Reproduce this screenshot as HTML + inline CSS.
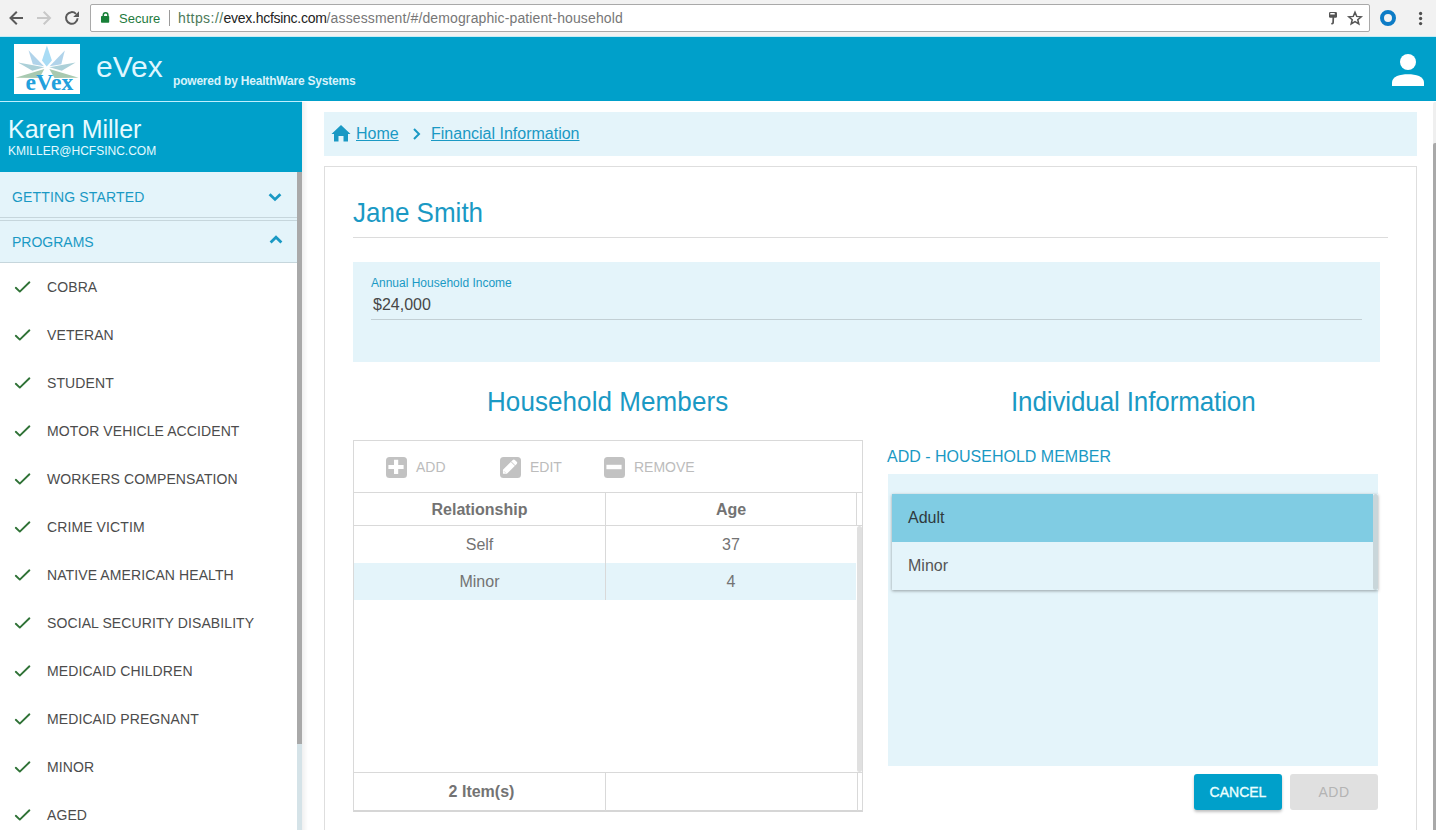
<!DOCTYPE html>
<html><head><meta charset="utf-8">
<style>
*{box-sizing:border-box;margin:0;padding:0}
html,body{width:1436px;height:830px;overflow:hidden;background:#fff;font-family:"Liberation Sans",sans-serif;position:relative}
.a{position:absolute}
.t{position:absolute;white-space:nowrap;line-height:1}
.big{transform:scaleY(1.055);transform-origin:0 22px}
</style></head><body>

<!-- Browser toolbar -->
<div class="a" style="left:0;top:0;width:1436px;height:37px;background:#f2f2f2"></div>
<div class="a" style="left:0;top:36px;width:1436px;height:1px;background:#c6ecf6"></div>
<svg class="a" style="left:0;top:0" width="90" height="37">
  <g fill="none" stroke="#5a5a5a" stroke-width="2">
    <path d="M23 18H11M16.8 11.7L10.5 18L16.8 24.3"/>
  </g>
  <g fill="none" stroke="#c8c8c8" stroke-width="2">
    <path d="M37 18H49.5M43.7 11.7L50 18L43.7 24.3"/>
  </g>
  <g fill="none" stroke="#5a5a5a" stroke-width="2">
    <path d="M77.6 18.3A5.8 5.8 0 1 1 76 13.9"/>
  </g>
  <path d="M79 11.2V17H73.2Z" fill="#5a5a5a"/>
</svg>
<div class="a" style="left:90px;top:4px;width:1280px;height:28px;background:#fff;border:1px solid #a9a9a9;border-radius:2px"></div>
<svg class="a" style="left:100px;top:11px" width="12" height="14">
  <path d="M3.3 5.5V4A2.3 2.3 0 0 1 7.9 4V5.5" fill="none" stroke="#188038" stroke-width="1.5"/>
  <rect x="1" y="5" width="8.2" height="6.7" rx="0.7" fill="#188038"/>
</svg>
<div class="t" style="left:119px;top:12px;font-size:13px;color:#1e7a3e">Secure</div>
<div class="a" style="left:169px;top:10px;width:1px;height:16px;background:#9a9a9a"></div>
<div class="t" style="left:178px;top:11px;font-size:14px;color:#777"><span style="color:#4d7a5a;letter-spacing:0.44px">https://</span><span style="color:#222;letter-spacing:-0.27px">evex.hcfsinc.com</span><span style="letter-spacing:0.12px">/assessment/#/demographic-patient-household</span></div>
<svg class="a" style="left:1326px;top:10px" width="14" height="16">
  <rect x="3" y="2" width="8" height="5.8" rx="1.2" fill="#555"/>
  <rect x="4.2" y="3" width="4.6" height="1.6" rx="0.4" fill="#fff"/>
  <path d="M7.3 7.5L7.1 12.6Q7 13.8 6 13.6" fill="none" stroke="#555" stroke-width="1.7" stroke-linecap="round"/>
</svg>
<svg class="a" style="left:1346px;top:10px" width="18" height="17">
  <path d="M9.00 2.25L10.70 6.40L15.18 6.74L11.76 9.65L12.82 14.01L9.00 11.65L5.18 14.01L6.24 9.65L2.82 6.74L7.30 6.40Z" fill="none" stroke="#555" stroke-width="1.5" stroke-linejoin="miter"/>
</svg>
<div class="a" style="left:1380px;top:10px;width:16px;height:16px;border-radius:50%;border:4px solid #0d7cc6"></div>
<svg class="a" style="left:1414px;top:8px" width="14" height="20"><circle cx="6.6" cy="5.5" r="1.65" fill="#505050"/><circle cx="6.6" cy="10.5" r="1.65" fill="#505050"/><circle cx="6.6" cy="15.6" r="1.65" fill="#505050"/></svg>

<!-- App header -->
<div class="a" style="left:0;top:37px;width:1436px;height:64px;background:#00a0ca"></div>
<div class="a" style="left:14px;top:44px;width:66px;height:50px;background:#fff"></div>
<svg class="a" style="left:14px;top:44px" width="66" height="50">
  <path d="M32.9 1.4L37.9 16.5L32.7 22.6L28 16.5Z" fill="#a9dcf5"/>
  <path d="M14.5 6.2L30 22.2L18.8 20.2Z" fill="#b0d3ea"/>
  <path d="M50.8 6.4L35.6 22.2L47.3 20.2Z" fill="#b0d3ea"/>
  <path d="M4.1 18.4L30.3 23.2L18.4 26.7Z" fill="#acd0d8"/>
  <path d="M61.6 18.4L35.4 23.2L47.8 26.7Z" fill="#acd0d8"/>
  <path d="M1.4 33.8L30.3 25L25.5 34Z" fill="#a8c9b0"/>
  <path d="M64.6 33.8L35.4 25L40.5 34Z" fill="#a8c9b0"/>
  <text x="11.6" y="46" font-family="Liberation Serif" font-weight="bold" font-size="23.6" fill="#22a0dc">eVex</text>
</svg>
<div class="t" style="left:96px;top:52px;font-size:30px;color:#dff6ff">eVex</div>
<div class="t" style="left:173px;top:75px;font-size:12px;font-weight:bold;color:#d8f2fb;letter-spacing:-0.2px">powered by HealthWare Systems</div>
<svg class="a" style="left:1390px;top:52px" width="36" height="36">
  <circle cx="18" cy="10" r="8" fill="#fff"/>
  <path d="M2 34V30.5C2 24.5 10 22.3 18 22.3C26 22.3 34 24.5 34 30.5V34Z" fill="#fff"/>
</svg>

<!-- Sidebar -->
<div class="a" style="left:0;top:101px;width:302px;height:1px;background:#bfefff"></div>
<div class="a" style="left:0;top:102px;width:302px;height:70px;background:#00a0ca"></div>
<div class="t" style="left:8px;top:117px;font-size:25px;color:#e6fbff">Karen Miller</div>
<div class="t" style="left:8px;top:145px;font-size:12px;color:#e4faff">KMILLER@HCFSINC.COM</div>

<div class="a" style="left:0;top:172px;width:297px;height:90px;background:#e4f4fa"></div>
<div class="a" style="left:0;top:217px;width:297px;height:1px;background:#c6d6dc"></div>
<div class="t" style="left:12px;top:190px;font-size:14px;color:#1a99c4;letter-spacing:0.15px">GETTING STARTED</div>
<svg class="a" style="left:266px;top:190px" width="18" height="14"><path d="M3.6 4.2L9 9.4L14.4 4.2" fill="none" stroke="#1a99c4" stroke-width="2.8"/></svg>
<div class="a" style="left:0;top:220px;width:297px;height:1px;background:#c6d6dc"></div>
<div class="a" style="left:0;top:262px;width:297px;height:1px;background:#c6d6dc"></div>
<div class="t" style="left:12px;top:235px;font-size:14px;color:#1a99c4">PROGRAMS</div>
<svg class="a" style="left:267px;top:233px" width="18" height="14"><path d="M3.6 9.4L9 4.2L14.4 9.4" fill="none" stroke="#1a99c4" stroke-width="2.8"/></svg>

<svg class="a" style="left:14px;top:280px" width="18" height="14"><path d="M1.8 7.8L5.8 11.6L15.4 2.3" fill="none" stroke="#2f7236" stroke-width="1.9" stroke-linecap="round" stroke-linejoin="round"/></svg>
<div class="t" style="left:47px;top:280px;font-size:14px;color:#4c4c4c;letter-spacing:0.1px">COBRA</div>
<svg class="a" style="left:14px;top:328px" width="18" height="14"><path d="M1.8 7.8L5.8 11.6L15.4 2.3" fill="none" stroke="#2f7236" stroke-width="1.9" stroke-linecap="round" stroke-linejoin="round"/></svg>
<div class="t" style="left:47px;top:328px;font-size:14px;color:#4c4c4c;letter-spacing:0.1px">VETERAN</div>
<svg class="a" style="left:14px;top:376px" width="18" height="14"><path d="M1.8 7.8L5.8 11.6L15.4 2.3" fill="none" stroke="#2f7236" stroke-width="1.9" stroke-linecap="round" stroke-linejoin="round"/></svg>
<div class="t" style="left:47px;top:376px;font-size:14px;color:#4c4c4c;letter-spacing:0.1px">STUDENT</div>
<svg class="a" style="left:14px;top:424px" width="18" height="14"><path d="M1.8 7.8L5.8 11.6L15.4 2.3" fill="none" stroke="#2f7236" stroke-width="1.9" stroke-linecap="round" stroke-linejoin="round"/></svg>
<div class="t" style="left:47px;top:424px;font-size:14px;color:#4c4c4c;letter-spacing:0.1px">MOTOR VEHICLE ACCIDENT</div>
<svg class="a" style="left:14px;top:472px" width="18" height="14"><path d="M1.8 7.8L5.8 11.6L15.4 2.3" fill="none" stroke="#2f7236" stroke-width="1.9" stroke-linecap="round" stroke-linejoin="round"/></svg>
<div class="t" style="left:47px;top:472px;font-size:14px;color:#4c4c4c;letter-spacing:0.1px">WORKERS COMPENSATION</div>
<svg class="a" style="left:14px;top:520px" width="18" height="14"><path d="M1.8 7.8L5.8 11.6L15.4 2.3" fill="none" stroke="#2f7236" stroke-width="1.9" stroke-linecap="round" stroke-linejoin="round"/></svg>
<div class="t" style="left:47px;top:520px;font-size:14px;color:#4c4c4c;letter-spacing:0.1px">CRIME VICTIM</div>
<svg class="a" style="left:14px;top:568px" width="18" height="14"><path d="M1.8 7.8L5.8 11.6L15.4 2.3" fill="none" stroke="#2f7236" stroke-width="1.9" stroke-linecap="round" stroke-linejoin="round"/></svg>
<div class="t" style="left:47px;top:568px;font-size:14px;color:#4c4c4c;letter-spacing:0.1px">NATIVE AMERICAN HEALTH</div>
<svg class="a" style="left:14px;top:616px" width="18" height="14"><path d="M1.8 7.8L5.8 11.6L15.4 2.3" fill="none" stroke="#2f7236" stroke-width="1.9" stroke-linecap="round" stroke-linejoin="round"/></svg>
<div class="t" style="left:47px;top:616px;font-size:14px;color:#4c4c4c;letter-spacing:0.1px">SOCIAL SECURITY DISABILITY</div>
<svg class="a" style="left:14px;top:664px" width="18" height="14"><path d="M1.8 7.8L5.8 11.6L15.4 2.3" fill="none" stroke="#2f7236" stroke-width="1.9" stroke-linecap="round" stroke-linejoin="round"/></svg>
<div class="t" style="left:47px;top:664px;font-size:14px;color:#4c4c4c;letter-spacing:0.1px">MEDICAID CHILDREN</div>
<svg class="a" style="left:14px;top:712px" width="18" height="14"><path d="M1.8 7.8L5.8 11.6L15.4 2.3" fill="none" stroke="#2f7236" stroke-width="1.9" stroke-linecap="round" stroke-linejoin="round"/></svg>
<div class="t" style="left:47px;top:712px;font-size:14px;color:#4c4c4c;letter-spacing:0.1px">MEDICAID PREGNANT</div>
<svg class="a" style="left:14px;top:760px" width="18" height="14"><path d="M1.8 7.8L5.8 11.6L15.4 2.3" fill="none" stroke="#2f7236" stroke-width="1.9" stroke-linecap="round" stroke-linejoin="round"/></svg>
<div class="t" style="left:47px;top:760px;font-size:14px;color:#4c4c4c;letter-spacing:0.1px">MINOR</div>
<svg class="a" style="left:14px;top:808px" width="18" height="14"><path d="M1.8 7.8L5.8 11.6L15.4 2.3" fill="none" stroke="#2f7236" stroke-width="1.9" stroke-linecap="round" stroke-linejoin="round"/></svg>
<div class="t" style="left:47px;top:808px;font-size:14px;color:#4c4c4c;letter-spacing:0.1px">AGED</div>

<!-- sidebar scrollbar -->
<div class="a" style="left:297px;top:172px;width:5px;height:658px;background:#d5e3e8"></div>
<div class="a" style="left:297px;top:172px;width:5px;height:572px;background:#a9a9a9"></div>
<div class="a" style="left:302px;top:102px;width:6px;height:728px;background:linear-gradient(to right,rgba(0,0,0,0.06),rgba(0,0,0,0))"></div>

<!-- page scrollbar -->
<div class="a" style="left:1433px;top:102px;width:3px;height:728px;background:#efefef;border-radius:2px 0 0 0"></div>
<div class="a" style="left:1433px;top:143px;width:3px;height:687px;background:#a9a9a9;border-radius:2px 0 0 0"></div>

<!-- Breadcrumb -->
<div class="a" style="left:324px;top:112px;width:1093px;height:44px;background:#e4f4fa"></div>
<svg class="a" style="left:331px;top:124px" width="20" height="19">
  <path d="M10 1L0.5 10H3V17.5H7.5V12H12.5V17.5H17V10H19.5Z" fill="#1a99c4"/>
</svg>
<div class="t" style="left:356px;top:126px;font-size:16px;color:#1a99c4;text-decoration:underline">Home</div>
<svg class="a" style="left:410px;top:126px" width="12" height="16"><path d="M4 3L9 8L4 13" fill="none" stroke="#1a99c4" stroke-width="2"/></svg>
<div class="t" style="left:431px;top:126px;font-size:16px;color:#1a99c4;text-decoration:underline">Financial Information</div>

<!-- Card -->
<div class="a" style="left:324px;top:166px;width:1093px;height:680px;border:1px solid #dedede"></div>
<div class="t big" style="left:353px;top:200px;font-size:26px;color:#1a99c4">Jane Smith</div>
<div class="a" style="left:353px;top:237px;width:1035px;height:1px;background:#dcdcdc"></div>

<div class="a" style="left:353px;top:262px;width:1027px;height:100px;background:#e4f4fa"></div>
<div class="t" style="left:371px;top:277px;font-size:12px;color:#1a99c4">Annual Household Income</div>
<div class="t" style="left:373px;top:297px;font-size:16px;color:#474747">$24,000</div>
<div class="a" style="left:371px;top:319px;width:991px;height:1px;background:#c2cfd4"></div>

<div class="t big" style="left:487px;top:389px;font-size:26px;color:#1a99c4;letter-spacing:0.08px">Household Members</div>
<div class="t big" style="left:1011px;top:389px;font-size:26px;color:#1a99c4;letter-spacing:-0.12px">Individual Information</div>

<!-- Table -->
<div class="a" style="left:353px;top:440px;width:510px;height:372px;border:1px solid #d9d9d9;border-bottom:2px solid #d6d6d6"></div>
<div class="a" style="left:354px;top:492px;width:508px;height:1px;background:#d9d9d9"></div>
<svg class="a" style="left:386px;top:457px" width="21" height="21"><rect x="0" y="0" width="21" height="21" rx="3.5" fill="#c2c2c2"/><path d="M10.1 2.8V17.1M2.4 10H17.6" stroke="#fff" stroke-width="4.2"/></svg>
<div class="t" style="left:416px;top:460px;font-size:14px;color:#bcbcbc">ADD</div>
<svg class="a" style="left:500px;top:457px" width="21" height="21"><rect x="0" y="0" width="21" height="21" rx="3.5" fill="#c2c2c2"/><g transform="translate(9.8 9.9) rotate(-45)"><path d="M-6.9 -2.8H7A1.5 1.5 0 0 1 8.5 -1.3V1.3A1.5 1.5 0 0 1 7 2.8H-6.9L-9.7 0Z" fill="#fff"/><path d="M4.6 -3V3" stroke="#c2c2c2" stroke-width="0.9"/><path d="M-7.2 -1.2V1.6" stroke="#d8d8d8" stroke-width="0.7"/></g></svg>
<div class="t" style="left:530px;top:460px;font-size:14px;color:#bcbcbc">EDIT</div>
<svg class="a" style="left:604px;top:457px" width="21" height="21"><rect x="0" y="0" width="21" height="21" rx="3.5" fill="#c2c2c2"/><path d="M2.4 10H17.6" stroke="#fff" stroke-width="4.4"/></svg>
<div class="t" style="left:634px;top:460px;font-size:14px;color:#bcbcbc">REMOVE</div>

<div class="a" style="left:354px;top:525px;width:508px;height:1px;background:#d9d9d9"></div>
<div class="a" style="left:605px;top:493px;width:1px;height:107px;background:#d9d9d9"></div>
<div class="a" style="left:856px;top:493px;width:1px;height:32px;background:#d9d9d9"></div>
<div class="t" style="left:354px;width:251px;text-align:center;top:502px;font-size:16px;font-weight:bold;color:#737373">Relationship</div>
<div class="t" style="left:606px;width:250px;text-align:center;top:502px;font-size:16px;font-weight:bold;color:#737373">Age</div>
<div class="t" style="left:354px;width:251px;text-align:center;top:537px;font-size:16px;color:#737373">Self</div>
<div class="t" style="left:606px;width:250px;text-align:center;top:537px;font-size:16px;color:#737373">37</div>
<div class="a" style="left:354px;top:563px;width:251px;height:37px;background:#e4f4fa"></div>
<div class="a" style="left:606px;top:563px;width:250px;height:37px;background:#e4f4fa"></div>
<div class="t" style="left:354px;width:251px;text-align:center;top:574px;font-size:16px;color:#737373">Minor</div>
<div class="t" style="left:606px;width:250px;text-align:center;top:574px;font-size:16px;color:#737373">4</div>
<div class="a" style="left:857px;top:526px;width:5px;height:246px;border-radius:3px;background:#e0e0e0"></div>
<div class="a" style="left:354px;top:772px;width:508px;height:1px;background:#d9d9d9"></div>
<div class="a" style="left:605px;top:773px;width:1px;height:38px;background:#d9d9d9"></div>
<div class="a" style="left:857px;top:773px;width:1px;height:38px;background:#d9d9d9"></div>
<div class="t" style="left:356px;width:251px;text-align:center;top:784px;font-size:16px;font-weight:bold;color:#737373">2 Item(s)</div>

<!-- Right panel -->
<div class="t" style="left:887px;top:449px;font-size:16px;color:#1a99c4">ADD - HOUSEHOLD MEMBER</div>
<div class="a" style="left:888px;top:474px;width:490px;height:292px;background:#e4f4fa"></div>
<div class="a" style="left:892px;top:494px;width:486px;height:96px;background:#e4f4fa;box-shadow:0 1px 3px rgba(0,0,0,0.35)"></div>
<div class="a" style="left:892px;top:494px;width:481px;height:48px;background:#80cce3"></div>
<div class="a" style="left:1373px;top:494px;width:5px;height:96px;border-radius:3px;background:#c9d6da"></div>
<div class="t" style="left:908px;top:510px;font-size:16px;color:#2f3a3e">Adult</div>
<div class="t" style="left:908px;top:558px;font-size:16px;color:#555">Minor</div>

<div class="a" style="left:1194px;top:774px;width:88px;height:36px;background:#00a0ca;border-radius:3px;box-shadow:0 2px 3px rgba(0,0,0,0.25)"></div>
<div class="t" style="left:1194px;width:88px;text-align:center;top:785px;font-size:14px;color:#eaffff;-webkit-text-stroke:0.35px #eaffff">CANCEL</div>
<div class="a" style="left:1290px;top:774px;width:88px;height:36px;background:#e0e0e0;border-radius:3px"></div>
<div class="t" style="left:1290px;width:88px;text-align:center;top:785px;font-size:14px;color:#b4b4b4;letter-spacing:0.5px">ADD</div>

</body></html>
